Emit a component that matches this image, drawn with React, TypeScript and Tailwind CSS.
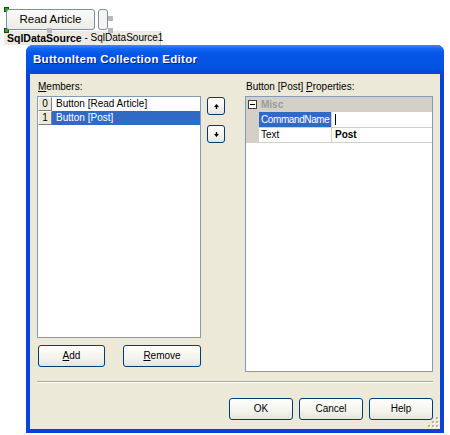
import React from 'react';

const xpBtn =
  'rounded-[3px] border border-[#003C74] bg-[linear-gradient(to_bottom,#FFFFFF_0%,#F4F3EE_60%,#E6E4DB_100%)] text-[10px] text-black flex items-center justify-center';

function Handle({ className }: { className: string }) {
  return <span className={`absolute w-[5px] h-[5px] bg-[#B8B8B8] ${className}`} />;
}

function ArrowButton({ dir }: { dir: 'up' | 'down' }) {
  return (
    <button className={`${xpBtn} w-[18px] h-[18px]`}>
      <svg width="7" height="7" viewBox="0 0 7 7">
        {dir === 'up' ? (
          <path d="M3.5 1 L6 4 H4.2 V6 H2.8 V4 H1 Z" fill="#000" />
        ) : (
          <path d="M3.5 6 L6 3 H4.2 V1 H2.8 V3 H1 Z" fill="#000" />
        )}
      </svg>
    </button>
  );
}

export default function App() {
  const members = [
    { idx: '0', name: 'Button [Read Article]' },
    { idx: '1', name: 'Button [Post]' },
  ];
  const [selected, setSelected] = React.useState(1);

  return (
    <div className="w-[450px] h-[435px] bg-white overflow-hidden font-['Liberation_Sans',Arial,sans-serif] text-[10px] leading-none text-black">
      {/* design surface */}
      <div className="relative ml-[6px] pt-[9px] flex gap-[3px]">
        <span className="absolute left-[-2px] top-[7px] w-[5px] h-[5px] bg-[#2EA02E] border border-[#105010]" />
        <span className="absolute left-[-2px] top-[28px] w-[5px] h-[5px] bg-[#2EA02E] border border-[#105010]" />
        <div className="relative w-[89px] h-[21px] rounded-[3px] border border-[#7A8FA8] bg-[linear-gradient(to_bottom,#FBFBF9,#ECEBE6)] flex items-center justify-center text-[11.5px]">
          Read Article
          <Handle className="left-[40px] bottom-[-4px]" />
        </div>
        <div className="relative w-[10px] h-[21px] rounded-[3px] border border-[#7A8FA8] bg-[#F4F4F0]">
          <Handle className="right-[-6px] top-[6px]" />
          <Handle className="right-[-6px] bottom-[-4px]" />
        </div>
      </div>
      <div className="ml-[4px] mt-[1px] w-[157px] h-[14px] bg-[#ECEAE2] border-r border-[#C8C6BC] flex items-center pl-[3px] whitespace-nowrap">
        <span className="font-bold text-[10.5px]">SqlDataSource</span>
        <span className="text-[10px]">&nbsp;- SqlDataSource1</span>
      </div>

      {/* dialog */}
      <div className="ml-[26px] w-[418px] h-[388px] rounded-t-[7px] bg-[#0842D6] flex flex-col overflow-hidden">
        <div className="h-[29px] shrink-0 bg-[linear-gradient(to_bottom,#3A8CFF_0%,#1467F2_12%,#0556E8_30%,#0454E4_75%,#0348D2_100%)] flex items-center pl-[7px]">
          <span className="text-white font-bold text-[11.5px] tracking-[0.3px] [text-shadow:1px_1px_0_#0A1E8C]">
            ButtonItem Collection Editor
          </span>
        </div>
        <div className="flex-1 mx-[4px] mb-[4px] bg-[#ECE9D8] flex flex-col px-[7px] pt-[7px] relative">
          <div className="flex">
            {/* left column */}
            <div className="w-[164px] flex flex-col">
              <div className="h-[12px] mb-[3px] flex items-center pl-[1px]">
                <span className="underline">M</span>embers:
              </div>
              <div className="h-[242px] bg-white border border-[#7F9DB9] flex flex-col">
                {members.map((m, i) => (
                  <div key={m.idx} className="flex h-[14px]" onClick={() => setSelected(i)}>
                    <div className="w-[14px] h-[14px] bg-[#ECE9D8] border-t border-l border-white border-r border-b border-r-[#808080] border-b-[#808080] flex items-center justify-center">
                      {m.idx}
                    </div>
                    <div
                      className={`flex-1 flex items-center pl-[4px] ${
                        i === selected ? 'bg-[#316AC5] text-white' : 'text-black'
                      }`}
                    >
                      {m.name}
                    </div>
                  </div>
                ))}
              </div>
              <div className="flex mt-[7px] gap-[18px] pl-[1px]">
                <button className={`${xpBtn} w-[67px] h-[22px]`}>
                  <span className="underline">A</span>dd
                </button>
                <button className={`${xpBtn} w-[78px] h-[22px]`}>
                  <span className="underline">R</span>emove
                </button>
              </div>
            </div>

            {/* arrows */}
            <div className="ml-[6px] pt-[16px] flex flex-col gap-[10px]">
              <ArrowButton dir="up" />
              <ArrowButton dir="down" />
            </div>

            {/* right column */}
            <div className="ml-[20px] w-[189px] flex flex-col">
              <div className="h-[12px] mb-[3px] flex items-center pl-[1px] whitespace-nowrap">
                Button [Post]&nbsp;<span className="underline">P</span>roperties:
              </div>
              <div className="h-[276px] bg-white border border-[#7F9DB9] flex flex-col">
                <div className="h-[15px] bg-[#D4D0C8] flex items-center">
                  <div className="w-[13px] flex justify-center">
                    <span className="w-[9px] h-[9px] border border-[#404040] bg-white flex items-center justify-center">
                      <span className="w-[5px] h-[1px] bg-black" />
                    </span>
                  </div>
                  <span className="font-bold text-[#9A9A9A] ml-[2px]">Misc</span>
                </div>
                <div className="flex flex-1">
                  <div className="w-[13px] bg-[#D4D0C8] h-[31px]" />
                  <div className="flex-1 flex flex-col">
                    <div className="flex h-[16px] border-b border-[#D4D0C8]">
                      <div className="w-[73px] bg-[#316AC5] text-white flex items-center pl-[2px] border-r border-[#D4D0C8] tracking-[-0.4px] whitespace-nowrap overflow-hidden">
                        CommandName
                      </div>
                      <div className="flex-1 flex items-center pl-[3px]">
                        <span className="w-[1px] h-[11px] bg-black" />
                      </div>
                    </div>
                    <div className="flex h-[15px] border-b border-[#D4D0C8]">
                      <div className="w-[73px] flex items-center pl-[2px] border-r border-[#D4D0C8]">Text</div>
                      <div className="flex-1 flex items-center pl-[3px] font-bold">Post</div>
                    </div>
                  </div>
                </div>
              </div>
            </div>
          </div>

          <div className="mt-[9px] h-[2px] border-t border-[#ACA899] border-b border-b-white" />

          <div className="mt-[15px] flex justify-end gap-[6px]">
            <button className={`${xpBtn} w-[64px] h-[22px]`}>OK</button>
            <button className={`${xpBtn} w-[64px] h-[22px]`}>Cancel</button>
            <button className={`${xpBtn} w-[64px] h-[22px]`}>Help</button>
          </div>

          <svg className="absolute right-[1px] bottom-[1px]" width="11" height="11" viewBox="0 0 11 11">
            {[
              [8, 0],
              [8, 4],
              [4, 4],
              [8, 8],
              [4, 8],
              [0, 8],
            ].map(([x, y]) => (
              <g key={`${x}-${y}`}>
                <rect x={x + 1} y={y + 1} width="2" height="2" fill="#FFFFFF" />
                <rect x={x} y={y} width="2" height="2" fill="#B8B4A4" />
              </g>
            ))}
          </svg>
        </div>
      </div>
    </div>
  );
}
